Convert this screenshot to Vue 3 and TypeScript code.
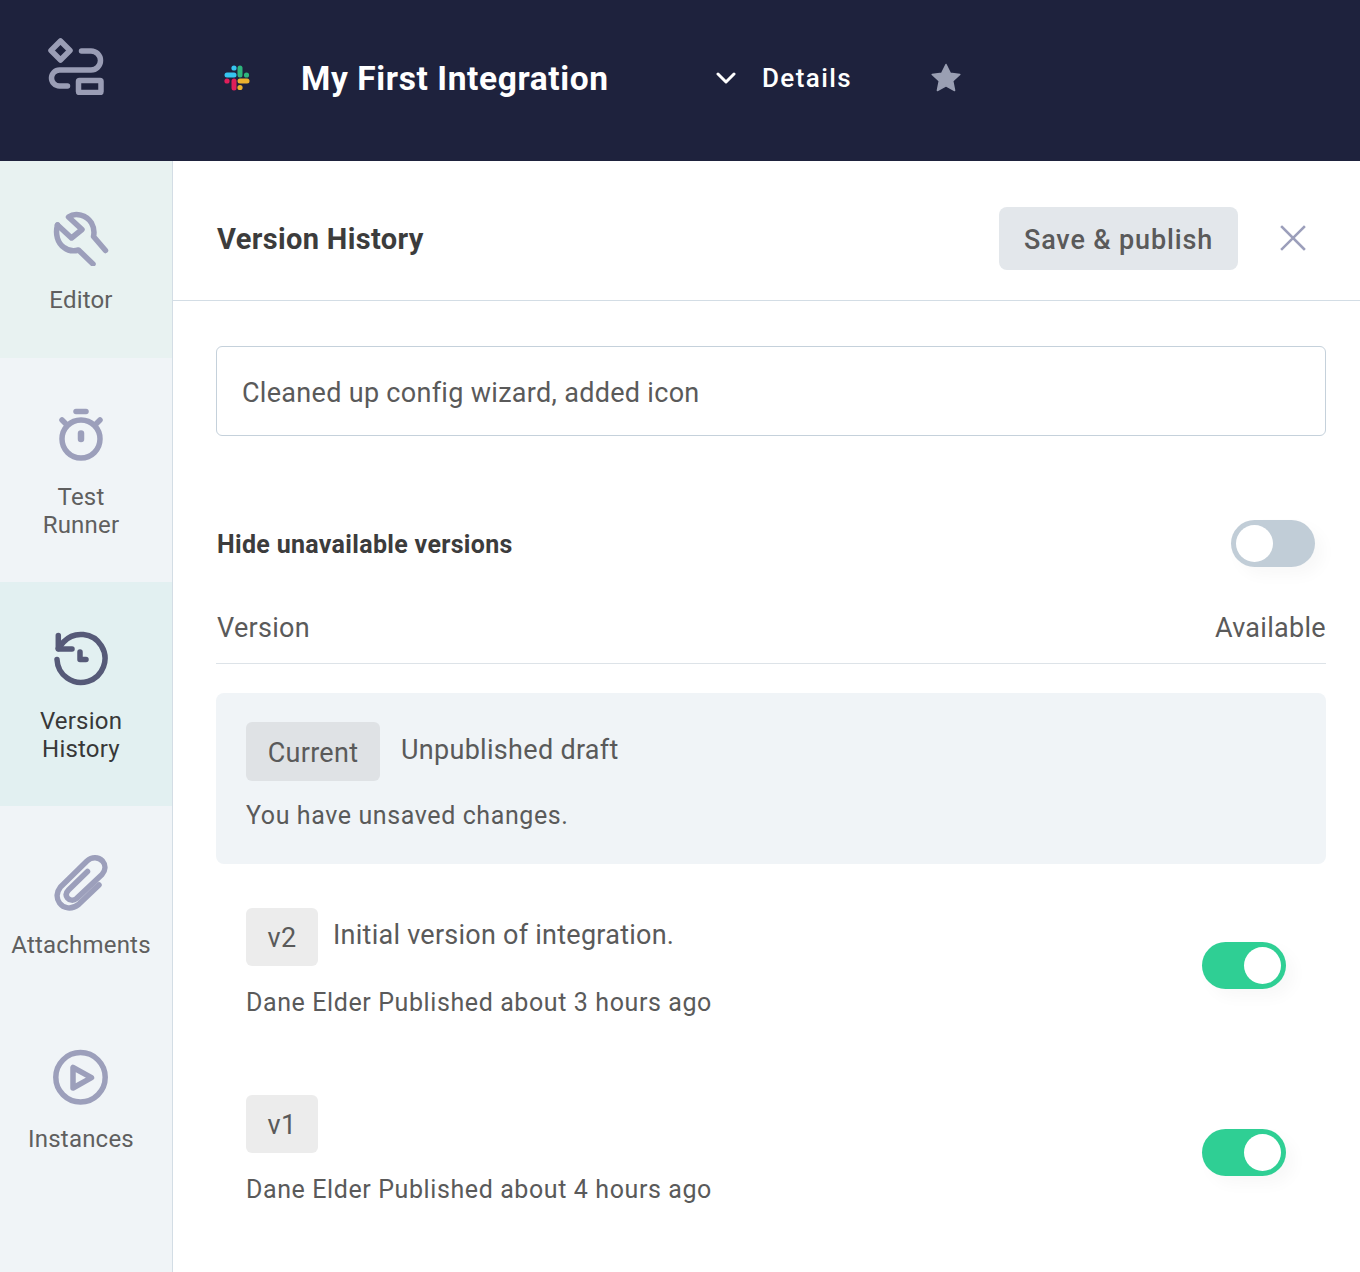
<template>
  <div class="app">
    <header class="topbar">
      <div class="logo-cell">
        <svg class="logo" viewBox="0 0 58 58" fill="none" stroke="#9a9db5" stroke-width="5.500" stroke-linecap="round" stroke-linejoin="round">
          <path d="M13.500 4 23 13.500 13.500 23 4 13.500Z" />
          <path d="M34.500 14H44A9.500 9.500 0 0 1 44 33H12.500A8 8 0 0 0 12.500 49H20.500" />
          <rect x="31.500" y="43.500" width="22.500" height="12" rx="1" />
        </svg>
      </div>
      <svg class="slack" viewBox="0 0 26 26">
        <rect x="0.500" y="7.500" width="12" height="5" rx="2.500" fill="#36c5f0" />
        <circle cx="10" cy="3" r="2.600" fill="#36c5f0" />
        <rect x="13.500" y="0.500" width="5" height="12" rx="2.500" fill="#2eb67d" />
        <circle cx="22.500" cy="10" r="2.600" fill="#2eb67d" />
        <rect x="13.500" y="13.500" width="12" height="5" rx="2.500" fill="#ecb22e" />
        <circle cx="16" cy="22.500" r="2.600" fill="#ecb22e" />
        <rect x="7.500" y="13.500" width="5" height="12" rx="2.500" fill="#e01e5a" />
        <circle cx="3" cy="16" r="2.600" fill="#e01e5a" />
      </svg>
      <h1 class="app-title">My First Integration</h1>
      <svg class="chevron" viewBox="0 0 20 12" fill="none" stroke="#fff" stroke-width="3" stroke-linecap="round" stroke-linejoin="round">
        <path d="M2 2 10 10 18 2" />
      </svg>
      <span class="details">Details</span>
      <svg class="star" viewBox="0 0 30 30">
        <path fill="#9a9fb3" d="M15 1.500 19.200 10.200 28.800 11.400 21.700 18 23.600 27.500 15 22.800 6.400 27.500 8.300 18 1.200 11.400 10.800 10.200Z" stroke="#9a9fb3" stroke-width="1.500" stroke-linejoin="round" />
      </svg>
    </header>

    <div class="body">
      <nav class="sidebar">
        <div class="nav-item editor">
          <svg class="nav-icon" viewBox="0 0 56 56" fill="none" stroke="#9c9fbb" stroke-width="5.500" stroke-linecap="round" stroke-linejoin="round">
            <path d="M4.500 15 18.500 28 29 19.500 15.500 7C22.500 2 33.500 5 38.500 13C41 17.500 41.500 22 40.500 26.500L52.500 40.500" />
            <path d="M4.500 15C2 24 4.500 33 11 37.500C15.500 41 20.500 41.500 25.500 40L40 54" />
          </svg>
          <span class="nav-label">Editor</span>
        </div>
        <div class="nav-item runner">
          <svg class="nav-icon" viewBox="0 0 56 56" fill="none" stroke="#9c9fbb" stroke-width="5.500" stroke-linecap="round">
            <circle cx="28" cy="32" r="19" />
            <path d="M23 4.500H33" />
            <path d="M9 13 13 17M47 13 43 17" />
            <path d="M28 26.500V32" stroke-width="6.500" />
          </svg>
          <span class="nav-label">Test<br />Runner</span>
        </div>
        <div class="nav-item history">
          <svg class="nav-icon" viewBox="0 0 56 56" fill="none" stroke="#565a78" stroke-width="5.500" stroke-linecap="round" stroke-linejoin="round">
            <path d="M4 28.500A24 24 0 1 0 10.500 11L5.300 17.500" />
            <path d="M5.300 4.500V18H19" />
            <path d="M27 21V28.500H33" />
          </svg>
          <span class="nav-label active">Version<br />History</span>
        </div>
        <div class="nav-item attachments">
          <svg class="nav-icon" viewBox="0 0 56 56" fill="none" stroke="#9c9fbb" stroke-width="5.500" stroke-linecap="round" stroke-linejoin="round">
            <path d="M46 30 25.500 49.500C18.500 55 10.500 53.500 6.500 48C3 43 3.500 37 7.500 32L34 6C39 1.500 45.500 2 49.500 6C53 10 52.500 15.500 49 19.500L23.500 43.500C20.500 46 16.500 45.500 14.500 43C12.500 40.500 13 37.500 15.500 35L34.500 16.500" />
          </svg>
          <span class="nav-label">Attachments</span>
        </div>
        <div class="nav-item instances">
          <svg class="nav-icon" viewBox="0 0 56 56" fill="none" stroke="#9c9fbb" stroke-width="5.500" stroke-linejoin="round">
            <circle cx="27.500" cy="28.300" r="24.700" />
            <path d="M20 18.500V39L38.500 28.700Z" />
          </svg>
          <span class="nav-label">Instances</span>
        </div>
      </nav>

      <main class="main">
        <div class="main-head">
          <h2 class="main-title">Version History</h2>
          <button class="publish">Save &amp; publish</button>
          <svg class="close" viewBox="0 0 26 26" fill="none" stroke="#9c9fbb" stroke-width="2.500" stroke-linecap="square">
            <path d="M2 2 24 24M24 2 2 24" />
          </svg>
        </div>

        <div class="content">
          <div class="comment">Cleaned up config wizard, added icon</div>

          <div class="hide-row">
            <span class="hide-label">Hide unavailable versions</span>
            <span class="toggle off"><span class="thumb"></span></span>
          </div>

          <div class="table-head">
            <span>Version</span>
            <span>Available</span>
          </div>

          <section class="current">
            <div class="current-top">
              <span class="tag current-tag">Current</span>
              <span class="desc">Unpublished draft</span>
            </div>
            <p class="current-note">You have unsaved changes.</p>
          </section>

          <div v-for="v in versions" :key="v.tag" class="version">
            <div class="version-info">
              <div class="version-top">
                <span class="tag">{{ v.tag }}</span>
                <span v-if="v.note" class="desc">{{ v.note }}</span>
              </div>
              <p class="meta">{{ v.meta }}</p>
            </div>
            <span class="toggle on"><span class="thumb"></span></span>
          </div>
        </div>
      </main>
    </div>
  </div>
</template>

<script setup lang="ts">
interface VersionRow {
  tag: string;
  note: string;
  meta: string;
}

const versions: VersionRow[] = [
  { tag: "v2", note: "Initial version of integration.", meta: "Dane Elder Published about 3 hours ago" },
  { tag: "v1", note: "", meta: "Dane Elder Published about 4 hours ago" },
];
</script>

<style>
html,
body {
  margin: 0;
  background: #fff;
}
</style>

<style scoped>
.app {
  width: 1360px;
  height: 1272px;
  overflow: hidden;
  display: flex;
  flex-direction: column;
  font-family: Roboto, "Liberation Sans", sans-serif;
  color: #5a5a5a;
}

.topbar {
  flex: none;
  height: 161px;
  box-sizing: border-box;
  padding-bottom: 5px;
  background: #1e223d;
  display: flex;
  align-items: center;
}

.logo-cell {
  width: 224px;
  padding-left: 47px;
  box-sizing: border-box;
  flex: none;
  margin-top: -24px;
}

.logo {
  display: block;
  width: 58px;
  height: 58px;
}

.slack {
  flex: none;
  width: 26px;
  height: 26px;
  margin-right: 51px;
}

.app-title {
  margin: 0;
  width: 415px;
  flex: none;
  color: #fff;
  font-size: 33.500px;
  font-weight: 700;
  letter-spacing: 0.600px;
}

.chevron {
  flex: none;
  width: 20px;
  height: 12px;
  margin-right: 26px;
}

.details {
  flex: none;
  width: 169px;
  color: #fff;
  font-size: 26px;
  font-weight: 500;
  letter-spacing: 1.400px;
}

.star {
  flex: none;
  width: 30px;
  height: 30px;
}

.body {
  flex: 1;
  display: flex;
  min-height: 0;
}

.sidebar {
  flex: none;
  width: 173px;
  box-sizing: border-box;
  border-right: 1px solid #d3dde5;
  background: #f0f4f7;
}

.nav-item {
  box-sizing: border-box;
  display: flex;
  flex-direction: column;
  align-items: center;
  padding-top: 49px;
  height: 224px;
  padding-right: 10px;
}

.nav-item.editor {
  height: 197px;
  background: #e8f2f1;
}

.nav-item.history {
  background: #e2f0f1;
}

.nav-item.attachments {
  height: 195px;
}

.nav-item.instances {
  padding-top: 48px;
}

.nav-icon {
  display: block;
  width: 56px;
  height: 56px;
  flex: none;
}

.nav-label {
  margin-top: 20px;
  font-size: 24px;
  line-height: 28px;
  letter-spacing: 0.200px;
  text-align: center;
  white-space: nowrap;
  color: #5f5f5f;
}

.nav-label.active {
  color: #383838;
}

.main {
  flex: 1;
  min-width: 0;
}

.main-head {
  box-sizing: border-box;
  height: 140px;
  padding: 16px 54px 0 44px;
  border-bottom: 1px solid #d3dde5;
  display: flex;
  align-items: center;
}

.main-title {
  flex: 1;
  margin: 0;
  font-size: 29px;
  font-weight: 700;
  letter-spacing: 0.350px;
  color: #3c3c3c;
}

.publish {
  width: 239px;
  height: 63px;
  margin-right: 42px;
  padding: 3px 0 0;
  border: 0;
  border-radius: 8px;
  background: #e3e7eb;
  color: #5a5a5a;
  font-family: inherit;
  font-size: 27px;
  font-weight: 500;
  letter-spacing: 0.850px;
}

.close {
  flex: none;
  width: 26px;
  height: 26px;
  margin-top: -1px;
}

.content {
  padding: 45px 34px 0 43px;
}

.comment {
  height: 90px;
  box-sizing: border-box;
  border: 1px solid #c5d1db;
  border-radius: 6px;
  padding: 3px 0 0 25px;
  display: flex;
  align-items: center;
  font-size: 27px;
  letter-spacing: 0.300px;
}

.hide-row {
  margin-top: 84px;
  height: 47px;
  padding-right: 11px;
  display: flex;
  align-items: center;
  justify-content: space-between;
}

.hide-label {
  font-size: 25px;
  font-weight: 700;
  letter-spacing: 0.320px;
  color: #3c3c3c;
  padding: 2px 0 0 1px;
}

.toggle {
  flex: none;
  position: relative;
  display: block;
  width: 84px;
  height: 47px;
  border-radius: 24px;
  box-shadow: 8px 8px 16px rgba(0, 0, 0, 0.03);
}

.toggle.off {
  background: #c1cdd7;
}

.toggle.on {
  background: #2fcf94;
}

.thumb {
  position: absolute;
  top: 5px;
  width: 37px;
  height: 37px;
  border-radius: 50%;
  background: #fff;
}

.off .thumb {
  left: 5px;
}

.on .thumb {
  right: 5px;
}

.table-head {
  margin-top: 28px;
  height: 69px;
  box-sizing: border-box;
  border-bottom: 1px solid #dde3e8;
  padding: 17px 0 0 1px;
  display: flex;
  justify-content: space-between;
  font-size: 27px;
  letter-spacing: 0.300px;
}

.current {
  margin-top: 29px;
  height: 171px;
  box-sizing: border-box;
  padding: 29px 30px 0;
  border-radius: 8px;
  background: #f0f4f7;
}

.current-top,
.version-top {
  display: flex;
}

.tag {
  flex: none;
  box-sizing: border-box;
  width: 72px;
  height: 58px;
  padding-top: 2px;
  border-radius: 6px;
  background: #ececec;
  display: flex;
  align-items: center;
  justify-content: center;
  font-size: 27px;
  letter-spacing: 0.300px;
}

.current-tag {
  width: 134px;
  height: 59px;
  background: #dfe2e5;
}

.desc {
  margin-left: 15px;
  margin-top: 10px;
  font-size: 27px;
  line-height: 34px;
  letter-spacing: 0.250px;
}

.current-tag + .desc {
  margin-left: 21px;
  margin-top: 11px;
  letter-spacing: 0.300px;
}

.current-note,
.meta {
  margin: 0;
  font-size: 25px;
  line-height: 32px;
  letter-spacing: 0.600px;
}

.current-note {
  margin-top: 19px;
}

.meta {
  margin-top: 21px;
}

.version {
  display: flex;
  align-items: center;
  justify-content: space-between;
  padding: 0 40px 0 30px;
  margin-top: 44px;
  height: 115px;
}

.version-info {
  align-self: flex-start;
}

.version + .version {
  margin-top: 72px;
}
</style>
